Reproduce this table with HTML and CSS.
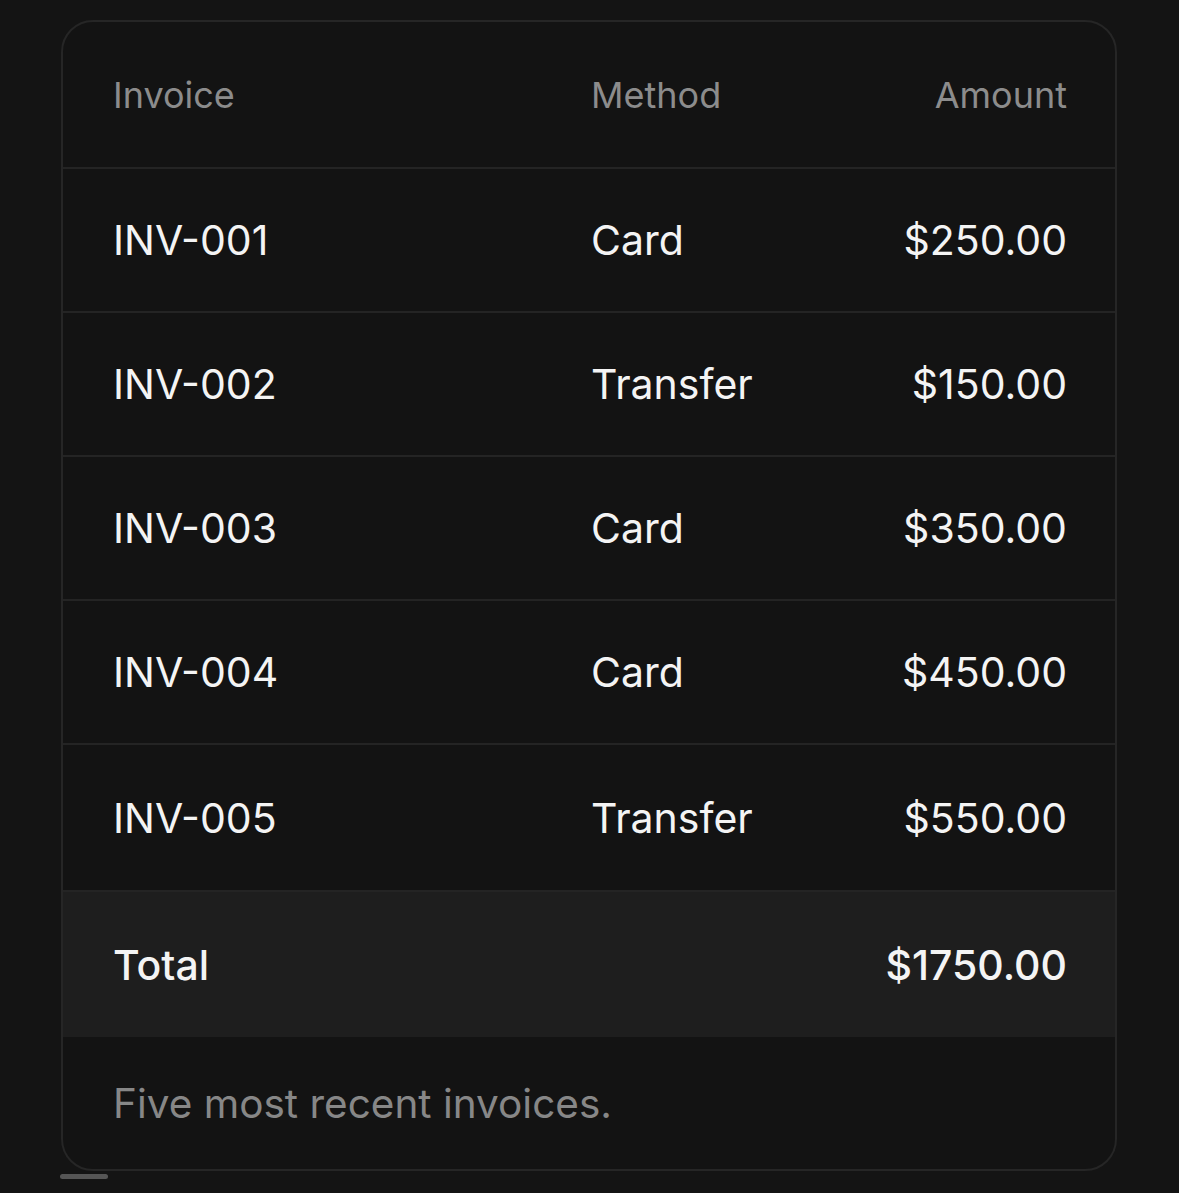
FILE: index.html
```html
<!DOCTYPE html>
<html lang="en">
<head>
    <meta charset="UTF-8">
    <meta name="viewport" content="width=device-width, initial-scale=1.0">
    <title>Invoices</title>
    <link rel="stylesheet" href="styles.css">
</head>
<body>
    <div class="page">
        <div class="table-card">
            <table class="invoice-table">
                <thead>
                    <tr>
                        <th>Invoice</th>
                        <th>Method</th>
                        <th class="right">Amount</th>
                    </tr>
                </thead>
                <tbody>
                    <tr><td>INV-001</td><td>Card</td><td class="right">$250.00</td></tr>
                    <tr><td>INV-002</td><td>Transfer</td><td class="right">$150.00</td></tr>
                    <tr><td>INV-003</td><td>Card</td><td class="right">$350.00</td></tr>
                    <tr><td>INV-004</td><td>Card</td><td class="right">$450.00</td></tr>
                    <tr class="last-row"><td>INV-005</td><td>Transfer</td><td class="right">$550.00</td></tr>
                </tbody>
                <tfoot>
                    <tr>
                        <td colspan="2" class="total-label">Total</td>
                        <td class="right total-value">$1750.00</td>
                    </tr>
                </tfoot>
            </table>
            <div class="caption">Five most recent invoices.</div>
        </div>
        <div class="scroll-thumb"></div>
    </div>
</body>
</html>
```

FILE: styles.css
```css
/* Page */
body {
    margin: 0;
    padding: 0;
    background-color: #141414;
    font-family: 'Inter', 'Noto Sans', sans-serif;
    color: #f4f4f4;
}

.page {
    padding: 20px 62px 0 61px;
}

/* Card */
.table-card {
    width: 1052px;
    border: 2px solid #262626;
    border-radius: 32px;
    overflow: hidden;
    background-color: #131313;
}

.invoice-table {
    width: 100%;
    border-collapse: collapse;
}

.invoice-table th,
.invoice-table td {
    text-align: left;
    padding: 0 50px;
    border-bottom: 2px solid #242424;
}

.invoice-table th {
    height: 145px;
    font-size: 36px;
    font-weight: 400;
    color: #8c8c8c;
}

.invoice-table th:first-child,
.invoice-table td:first-child {
    width: 378px;
}

.invoice-table td {
    height: 142px;
    font-size: 41px;
    font-weight: 400;
}

.invoice-table .last-row td {
    height: 145px;
}

.invoice-table .right {
    text-align: right;
    padding-right: 48px;
}

.invoice-table tfoot td {
    height: 145px;
    background-color: #1e1e1e;
    font-weight: 500;
    border-bottom: none;
}

.caption {
    height: 132px;
    padding: 0 50px;
    display: flex;
    align-items: center;
    font-size: 40.5px;
    color: #878787;
}

.scroll-thumb {
    width: 48px;
    height: 5px;
    margin-top: 3px;
    margin-left: -1px;
    border-radius: 3px;
    background-color: #555;
}
```
